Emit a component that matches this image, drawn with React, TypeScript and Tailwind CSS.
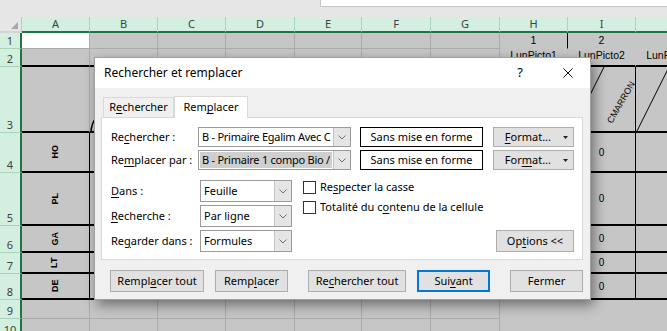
import React from 'react';

const COLS = ['A', 'B', 'C', 'D', 'E', 'F', 'G', 'H', 'I', 'J'];
const ROWS = [1, 2, 3, 4, 5, 6, 7, 8, 9, 10];
const SIDE: Record<number, string> = { 4: 'HO', 5: 'PL', 6: 'GA', 7: 'LT', 8: 'DE' };

function Acc({ text, at }: { text: string; at: number }) {
  return (
    <span className="whitespace-nowrap">
      {text.slice(0, at)}
      <span className="underline underline-offset-2 decoration-1">{text[at]}</span>
      {text.slice(at + 1)}
    </span>
  );
}

function cellClass(r: number, c: number) {
  const thick = r >= 2 && r <= 8;
  const filled = c >= 7;
  const darkRight = (c === 0 && r >= 4 && r <= 8) || (c === 8 && r >= 3 && r <= 8) || (c === 7 && r === 1);
  const bottom = thick
    ? 'border-b-2 border-b-black'
    : filled
      ? 'border-b border-b-transparent'
      : 'border-b border-b-[#ababab]';
  const right = darkRight
    ? 'border-r-black'
    : filled && (r <= 2 || r >= 9)
      ? 'border-r-transparent'
      : 'border-r-[#ababab]';
  return [
    'border-r flex justify-center whitespace-nowrap overflow-visible',
    bottom,
    right,
    r === 1 && c === 0 ? 'bg-white' : 'bg-[#c6c6c6]',
    r === 2 ? 'items-end pb-[1px]' : 'items-center',
  ].join(' ');
}

function cellText(r: number, c: number) {
  if (c === 0 && SIDE[r]) {
    return <span className="-rotate-90 text-[9px] font-bold">{SIDE[r]}</span>;
  }
  if (r === 1 && c === 7) return '1';
  if (r === 1 && c === 8) return '2';
  if (r === 2 && c >= 7) return `LunPicto${c - 6}`;
  if (c === 8 && r >= 4 && r <= 8) return <span className="text-[10px]">0</span>;
  return null;
}

function Sheet() {
  return (
    <div className="grid grid-cols-[22px_68px_68px_68px_69px_67px_69px_69px_68px_68px_68px] grid-rows-[16px_16px_18px_66px_40px_53px_27px_21px_26px_19px_19px]">
      <div className="bg-[#e6e6e6] border-r border-r-[#c4c4c4] border-b-2 border-b-[#d4d4d4] flex items-end justify-end pr-[3px] pb-[2px]">
        <svg width="7" height="7">
          <polygon points="7,0 7,7 0,7" fill="#a6a6a6" />
        </svg>
      </div>
      {COLS.map((l) => (
        <div
          key={l}
          className="bg-[#d3efe0] border-r border-r-[#aad3bb] border-b-2 border-b-[#217346] text-[11px] text-[#3f3f3f] flex items-center justify-center"
        >
          {l}
        </div>
      ))}
      {ROWS.map((r) => (
        <React.Fragment key={r}>
          <div className="bg-[#d3efe0] border-b border-b-[#aad3bb] border-r-2 border-r-[#217346] text-[11px] text-[#3f3f3f] flex items-end justify-center leading-none pb-[2px]">
            {r}
          </div>
          {COLS.map((l, c) => (
            <div key={l} className={cellClass(r, c) + " font-['Liberation_Sans',Arial,sans-serif] text-[10.5px]"}>
              {cellText(r, c)}
            </div>
          ))}
        </React.Fragment>
      ))}
    </div>
  );
}

function Chevron() {
  return (
    <svg width="8" height="5" viewBox="0 0 8 5">
      <polyline points="0.5,0.5 4,4 7.5,0.5" fill="none" stroke="#6d6d6d" strokeWidth="1" />
    </svg>
  );
}

function Combo({ text, selected }: { text: string; selected?: boolean }) {
  return (
    <div className="w-[153px] h-[20px] flex border border-[#9a9a9a] bg-white">
      <div
        className={
          'flex-1 overflow-hidden whitespace-nowrap flex items-center pl-[2px] m-[1px] tracking-[-0.25px] ' +
          (selected ? 'bg-[#cfcfcf]' : '')
        }
      >
        {text}
      </div>
      <div className="w-[17px] bg-[#e5e5e5] border-l border-[#c4c4c4] flex items-center justify-center">
        <Chevron />
      </div>
    </div>
  );
}

function Select({ text }: { text: string }) {
  return (
    <div className="w-[92px] h-[22px] flex border border-[#9a9a9a] bg-white">
      <div className="flex-1 flex items-center pl-[3px]">{text}</div>
      <div className="w-[17px] bg-[#e5e5e5] border-l border-[#c4c4c4] flex items-center justify-center">
        <Chevron />
      </div>
    </div>
  );
}

function FormatButton({ at }: { at: number }) {
  return (
    <div className="w-[81px] h-[20px] bg-[#e1e1e1] border border-[#adadad] flex items-center justify-end pr-[5px] gap-[12px]">
      <Acc text="Format..." at={at} />
      <svg width="5" height="3">
        <polygon points="0,0 5,0 2.5,3" fill="#222" />
      </svg>
    </div>
  );
}

function Button({ w, children, focus }: { w: string; children: React.ReactNode; focus?: boolean }) {
  return (
    <div
      className={
        w +
        ' h-[22px] bg-[#e1e1e1] flex items-center justify-center ' +
        (focus ? 'border-2 border-[#0078d7]' : 'border border-[#adadad]')
      }
    >
      {children}
    </div>
  );
}

function Dialog() {
  return (
    <div className="absolute left-[94px] top-[57px] w-[497px] h-[243px] bg-[#f0f0f0] border border-[#a0a0a0] shadow-[3px_5px_12px_rgba(0,0,0,0.45)] flex flex-col text-[11px] text-black">
      <div className="h-[30px] bg-white flex items-center pl-[9px] pr-[17px]">
        <span className="flex-1 text-[12px]">Rechercher et remplacer</span>
        <span className="w-[12px] text-center text-[13px] mr-[37px]">?</span>
        <svg width="10" height="10" viewBox="0 0 10 10">
          <line x1="0.5" y1="0.5" x2="9.5" y2="9.5" stroke="#111" strokeWidth="1" />
          <line x1="9.5" y1="0.5" x2="0.5" y2="9.5" stroke="#111" strokeWidth="1" />
        </svg>
      </div>
      <div className="pl-[6px] pt-[8px] flex flex-col">
        <div className="flex items-end h-[21px] ml-[2px] relative z-10">
          <div className="w-[71px] h-[20px] border border-b-0 border-[#d9d9d9] bg-[#f0f0f0] flex items-center justify-center">
            <Acc text="Rechercher" at={1} />
          </div>
          <div className="w-[74px] h-[22px] -mb-px border border-b-0 border-[#d9d9d9] bg-white flex items-center justify-center">
            <Acc text="Remplacer" at={3} />
          </div>
        </div>
        <div className="w-[482px] h-[143px] border border-[#d9d9d9] bg-white pl-[9px] pr-[8px] pt-[9px] flex flex-col">
          <div className="flex items-center h-[20px]">
            <div className="w-[87px]">
              <Acc text="Rechercher :" at={2} />
            </div>
            <Combo text="B - Primaire Egalim Avec C" />
            <div className="ml-[9px] w-[123px] h-[20px] border border-black flex items-center justify-center">Sans mise en forme</div>
            <div className="ml-[10px]">
              <FormatButton at={0} />
            </div>
          </div>
          <div className="flex items-center h-[20px] mt-[3px]">
            <div className="w-[87px]">
              <Acc text="Remplacer par :" at={2} />
            </div>
            <Combo text="B - Primaire 1 compo Bio / " selected />
            <div className="ml-[9px] w-[123px] h-[20px] border border-black flex items-center justify-center">Sans mise en forme</div>
            <div className="ml-[10px]">
              <FormatButton at={3} />
            </div>
          </div>
          <div className="flex mt-[7px]">
            <div className="flex flex-col gap-[3px] pt-[3px]">
              <div className="flex items-center">
                <div className="w-[89px]">
                  <Acc text="Dans :" at={0} />
                </div>
                <Select text="Feuille" />
              </div>
              <div className="flex items-center">
                <div className="w-[89px]">
                  <Acc text="Recherche :" at={0} />
                </div>
                <Select text="Par ligne" />
              </div>
              <div className="flex items-center">
                <div className="w-[89px]">
                  <Acc text="Regarder dans :" at={2} />
                </div>
                <Select text="Formules" />
              </div>
            </div>
            <div className="flex-1 ml-[11px] flex flex-col justify-between">
              <div className="flex flex-col">
                <div className="h-[20px] flex items-center gap-[4px]">
                  <div className="w-[13px] h-[13px] border border-[#333] bg-white" />
                  <Acc text="Respecter la casse" at={2} />
                </div>
                <div className="h-[20px] flex items-center gap-[4px]">
                  <div className="w-[13px] h-[13px] border border-[#333] bg-white" />
                  <Acc text="Totalité du contenu de la cellule" at={13} />
                </div>
              </div>
              <div className="self-end">
                <Button w="w-[78px]">
                  <Acc text="Options <<" at={2} />
                </Button>
              </div>
            </div>
          </div>
        </div>
        <div className="flex mt-[10px] ml-[9px]">
          <Button w="w-[94px]">
            <Acc text="Remplacer tout" at={5} />
          </Button>
          <div className="ml-[11px]">
            <Button w="w-[73px]">
              <Acc text="Remplacer" at={4} />
            </Button>
          </div>
          <div className="ml-[20px]">
            <Button w="w-[98px]">
              <Acc text="Rechercher tout" at={2} />
            </Button>
          </div>
          <div className="ml-[11px]">
            <Button w="w-[73px]" focus>
              <Acc text="Suivant" at={3} />
            </Button>
          </div>
          <div className="ml-[20px]">
            <Button w="w-[73px]">Fermer</Button>
          </div>
        </div>
      </div>
    </div>
  );
}

export default function App() {
  return (
    <div className="relative w-[667px] h-[331px] overflow-hidden bg-[#c6c6c6] font-['Segoe_UI','Noto_Sans',sans-serif] text-black">
      <div className="flex h-[17px] bg-[#e6e6e6]">
        <div className="w-[320px]" />
        <div className="flex-1 h-[7px] bg-white border-l border-b border-[#c6c6c6]" />
      </div>
      <Sheet />
      <svg className="absolute left-0 top-0 pointer-events-none" width="667" height="331">
        <line x1="604" y1="67" x2="571" y2="133" stroke="#000" strokeWidth="1" />
        <line x1="669" y1="67" x2="636" y2="133" stroke="#000" strokeWidth="1" />
        <path d="M96 118 Q91 124 91 133" fill="none" stroke="#000" strokeWidth="1.5" />
        <text
          x="612"
          y="124"
          transform="rotate(-60 612 124)"
          fontFamily="Liberation Sans, Arial, sans-serif"
          fontSize="9"
          fill="#000"
        >
          CMARRON
        </text>
      </svg>
      <Dialog />
    </div>
  );
}
